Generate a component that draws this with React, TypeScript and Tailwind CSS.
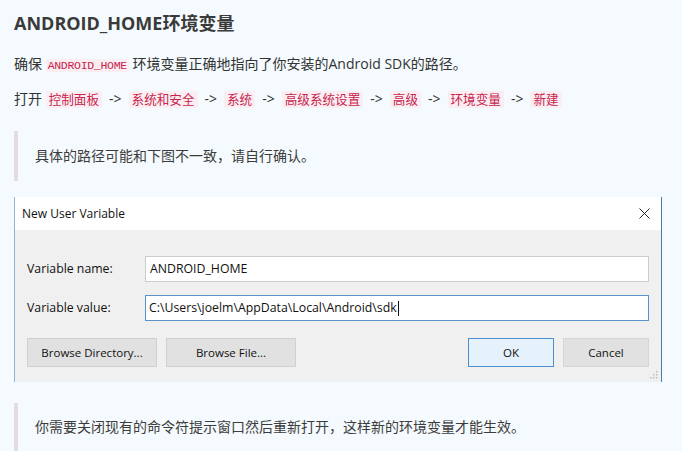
import React from 'react'

const cjk = { fontFamily: '"Open Sans", "Noto Sans CJK SC", sans-serif' }
const win = { fontFamily: '"Open Sans", "Noto Sans", sans-serif' }

// ピンク背景のインラインコード
const Code: React.FC<{ children: React.ReactNode; mono?: boolean }> = ({ children, mono }) => (
  <code
    className={
      mono
        ? 'rounded-[2px] bg-[#fbeef2] px-[2px] text-[11.5px] text-[#c7254e]'
        : 'rounded-[2px] bg-[#fbeef2] px-[3px] text-[12.6px] text-[#c7254e]'
    }
    style={mono ? { fontFamily: '"Liberation Mono", monospace', letterSpacing: '-0.3px' } : cjk}
  >
    {children}
  </code>
)

const Arrow = () => <span className="px-[7px] text-[#333]">-&gt;</span>

const Button: React.FC<{ children: React.ReactNode; className?: string }> = ({ children, className }) => (
  <div
    className={
      'flex h-[29px] items-center justify-center border text-[11.5px] text-[#111] ' +
      (className ?? 'border-[#cfcfcf] bg-[#e1e1e1]')
    }
  >
    {children}
  </div>
)

export default function App() {
  const path = ['控制面板', '系统和安全', '系统', '高级系统设置', '高级', '环境变量', '新建']
  return (
    <div className="min-h-screen bg-[#f4fafd] px-[14px] pt-[9px] text-[#333]" style={cjk}>
      <h2 className="text-[18px] font-bold leading-[28px] text-[#3a3a3a]">ANDROID_HOME环境变量</h2>
      <p className="mt-[16px] text-[14px] leading-[22px]">
        确保 <Code mono>ANDROID_HOME</Code> 环境变量正确地指向了你安装的Android SDK的路径。
      </p>
      <p className="mt-[11px] text-[14px] leading-[22px]">
        打开{' '}
        {path.map((p, i) => (
          <React.Fragment key={p}>
            <Code>{p}</Code>
            {i < path.length - 1 && <Arrow />}
          </React.Fragment>
        ))}
      </p>
      <blockquote className="mt-[20px] border-l-4 border-[#e6dae1] py-[14px] pl-[17px] text-[14px] leading-[22px] text-[#3c3c3c]">
        具体的路径可能和下图不一致，请自行确认。
      </blockquote>

      {/* ダイアログのスクリーンショット */}
      <div className="relative mt-[16px] w-[648px] border-l border-r border-l-[#8cb6dc] border-r-[#4a7ca8]" style={win}>
        <div className="flex h-[33px] items-center justify-between bg-white pl-[7px] pr-[11px] text-[12px] text-[#111]">
          <span>New User Variable</span>
          <svg width="11" height="11" viewBox="0 0 11 11">
            <path d="M0.5 0.5 L10.5 10.5 M10.5 0.5 L0.5 10.5" stroke="#222" strokeWidth="1" />
          </svg>
        </div>
        <div className="h-[152px] bg-[#f0f0f0] pl-[12px] pr-[12px] pt-[26px] text-[12.3px] text-[#111]">
          <div className="flex items-center">
            <span className="w-[118px]">Variable name:</span>
            <div className="flex h-[26px] flex-1 items-center border border-[#cdcdcd] bg-white pl-[4px]">ANDROID_HOME</div>
          </div>
          <div className="mt-[13px] flex items-center">
            <span className="w-[118px]">Variable value:</span>
            <div className="flex h-[26px] flex-1 items-center border border-[#5a93c9] bg-white pl-[3px]">
              C:\Users\joelm\AppData\Local\Android\sdk
              <span className="ml-[1px] inline-block h-[15px] w-px bg-[#111]" />
            </div>
          </div>
          <div className="mt-[17px] flex">
            <Button className="w-[130px] border-[#d0d0d0] bg-[#e1e1e1]">Browse Directory...</Button>
            <Button className="ml-[9px] w-[130px] border-[#d0d0d0] bg-[#e1e1e1]">Browse File...</Button>
            <div className="flex-1" />
            <Button className="w-[86px] border-[#4d8fd0] bg-[#e5f1fb]">OK</Button>
            <Button className="ml-[9px] w-[86px] border-[#d6d6d6] bg-[#e1e1e1]">Cancel</Button>
          </div>
        </div>
        <svg className="absolute bottom-[3px] right-[3px]" width="8" height="8" viewBox="0 0 8 8">
          <rect x="6" y="0" width="1.5" height="1.5" fill="#bdbdbd" />
          <rect x="3" y="3" width="1.5" height="1.5" fill="#bdbdbd" />
          <rect x="6" y="3" width="1.5" height="1.5" fill="#bdbdbd" />
          <rect x="0" y="6" width="1.5" height="1.5" fill="#bdbdbd" />
          <rect x="3" y="6" width="1.5" height="1.5" fill="#bdbdbd" />
          <rect x="6" y="6" width="1.5" height="1.5" fill="#bdbdbd" />
        </svg>
      </div>

      <blockquote className="mt-[21px] border-l-4 border-[#e6dae1] py-[13px] pl-[17px] text-[14px] leading-[22px] text-[#3c3c3c]">
        你需要关闭现有的命令符提示窗口然后重新打开，这样新的环境变量才能生效。
      </blockquote>
    </div>
  )
}
